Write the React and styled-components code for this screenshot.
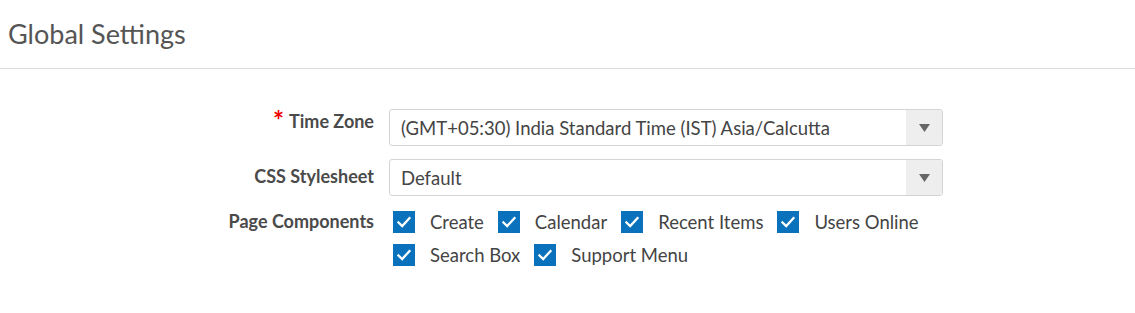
import React from "react";
import styled, { createGlobalStyle } from "styled-components";

const Global = createGlobalStyle`
  html, body { margin: 0; padding: 0; background: #fff; }
  body { font-family: Lato, "Open Sans", sans-serif; color: #444; }
`;

const Header = styled.div`
  height: 68px;
  border-bottom: 1px solid #dcdcdc;
  padding: 0 8px;
  display: flex;
  align-items: center;
`;

const Title = styled.h1`
  margin: 0 0 2px;
  font-size: 27px;
  font-weight: 400;
  color: #555;
`;

const Form = styled.div`
  display: grid;
  grid-template-columns: 374px 554px;
  column-gap: 15px;
  row-gap: 13px;
  padding-top: 40px;
`;

const Label = styled.div`
  text-align: right;
  font-weight: 700;
  font-size: 18px;
  line-height: 22px;
  color: #4a4a4a;
  padding-top: ${(p) => p.$pt || 0}px;
`;

const Req = styled.span`
  color: #e00;
  font-size: 26px;
  line-height: 0;
  margin-right: 5px;
  position: relative;
  top: 2px;
`;

const Select = styled.div`
  height: 37px;
  box-sizing: border-box;
  border: 1px solid #d4d4d4;
  border-radius: 3px;
  display: flex;
  align-items: stretch;
  font-size: 18.5px;
  color: #444;
  overflow: hidden;
`;

const SelectValue = styled.div`
  flex: 1;
  display: flex;
  align-items: center;
  padding-left: 11px;
`;

const Arrow = styled.div`
  width: 36px;
  background: #eee;
  display: flex;
  align-items: center;
  justify-content: center;
`;

const Checks = styled.div`
  display: flex;
  flex-wrap: wrap;
  width: 550px;
  row-gap: 11px;
  padding: 2px 0 0 4px;
`;

const Check = styled.label`
  display: flex;
  align-items: center;
  margin-right: 14px;
  font-size: 18.5px;
  line-height: 22px;
  color: #444;
`;

const Box = styled.span`
  width: 22px;
  height: 22px;
  background: #0a72bd;
  display: inline-flex;
  align-items: center;
  justify-content: center;
  margin-right: 15px;
`;

const Tick = () => (
  <svg width="16" height="16" viewBox="0 0 16 16">
    <path d="M2.5 8.5 L6.2 12 L13.5 4" fill="none" stroke="#fff" strokeWidth="2.3" strokeLinecap="square" />
  </svg>
);

const Caret = () => (
  <svg width="11" height="8" viewBox="0 0 11 8">
    <path d="M0 0 H11 L5.5 8 Z" fill="#666" />
  </svg>
);

const items = ["Create", "Calendar", "Recent Items", "Users Online", "Search Box", "Support Menu"];

export default function App() {
  return (
    <>
      <Global />
      <Header>
        <Title>Global Settings</Title>
      </Header>
      <Form>
        <Label $pt={1}>
          <Req>*</Req>Time Zone
        </Label>
        <Select>
          <SelectValue>(GMT+05:30) India Standard Time (IST) Asia/Calcutta</SelectValue>
          <Arrow><Caret /></Arrow>
        </Select>
        <Label $pt={6}>CSS Stylesheet</Label>
        <Select>
          <SelectValue>Default</SelectValue>
          <Arrow><Caret /></Arrow>
        </Select>
        <Label $pt={1}>Page Components</Label>
        <Checks>
          {items.map((it) => (
            <Check key={it}>
              <Box><Tick /></Box>
              {it}
            </Check>
          ))}
        </Checks>
      </Form>
    </>
  );
}
